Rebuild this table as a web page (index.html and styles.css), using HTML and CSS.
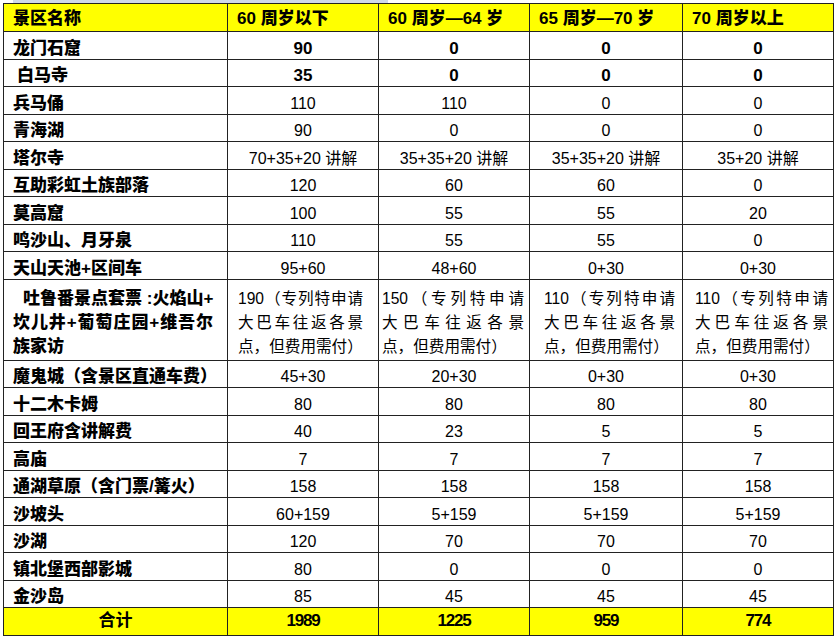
FILE: index.html
```html
<!DOCTYPE html>
<html lang="zh-CN">
<head>
<meta charset="utf-8">
<title>景区门票</title>
<link rel="stylesheet" href="styles.css">
</head>
<body>
<div class="strip"></div>
<table class="fees">
  <colgroup>
    <col class="c-name"><col class="c-a"><col class="c-b"><col class="c-c"><col class="c-d">
  </colgroup>
  <thead>
    <tr class="head">
      <th>景区名称</th><th>60 周岁以下</th><th>60 周岁—64 岁</th><th>65 周岁—70 岁</th><th>70 周岁以上</th>
    </tr>
  </thead>
  <tbody>
    <tr class="strong"><th>龙门石窟</th><td>90</td><td>0</td><td>0</td><td>0</td></tr>
    <tr class="strong"><th><span class="indent">白马寺</span></th><td>35</td><td>0</td><td>0</td><td>0</td></tr>
    <tr><th>兵马俑</th><td>110</td><td>110</td><td>0</td><td>0</td></tr>
    <tr><th>青海湖</th><td>90</td><td>0</td><td>0</td><td>0</td></tr>
    <tr><th>塔尔寺</th><td>70+35+20 讲解</td><td>35+35+20 讲解</td><td>35+35+20 讲解</td><td>35+20 讲解</td></tr>
    <tr><th>互助彩虹土族部落</th><td>120</td><td>60</td><td>60</td><td>0</td></tr>
    <tr><th>莫高窟</th><td>100</td><td>55</td><td>55</td><td>20</td></tr>
    <tr><th>鸣沙山、月牙泉</th><td>110</td><td>55</td><td>55</td><td>0</td></tr>
    <tr><th>天山天池+区间车</th><td>95+60</td><td>48+60</td><td>0+30</td><td>0+30</td></tr>
    <tr class="tall">
      <th><span class="jl first">吐鲁番景点套票 :火焰山+</span><span class="jl">坎儿井+葡萄庄园+维吾尔</span><span class="ll">族家访</span></th>
      <td><span class="jl">190（专列特申请</span><span class="jl">大巴车往返各景</span><span class="ll">点，但费用需付）</span></td>
      <td><span class="jl">150（专列特申请</span><span class="jl">大巴车往返各景</span><span class="ll">点，但费用需付）</span></td>
      <td><span class="jl">110（专列特申请</span><span class="jl">大巴车往返各景</span><span class="ll">点，但费用需付）</span></td>
      <td><span class="jl">110（专列特申请</span><span class="jl">大巴车往返各景</span><span class="ll">点，但费用需付）</span></td>
    </tr>
    <tr><th>魔鬼城（含景区直通车费）</th><td>45+30</td><td>20+30</td><td>0+30</td><td>0+30</td></tr>
    <tr><th>十二木卡姆</th><td>80</td><td>80</td><td>80</td><td>80</td></tr>
    <tr><th>回王府含讲解费</th><td>40</td><td>23</td><td>5</td><td>5</td></tr>
    <tr><th>高庙</th><td>7</td><td>7</td><td>7</td><td>7</td></tr>
    <tr><th>通湖草原（含门票/篝火）</th><td>158</td><td>158</td><td>158</td><td>158</td></tr>
    <tr><th>沙坡头</th><td>60+159</td><td>5+159</td><td>5+159</td><td>5+159</td></tr>
    <tr><th>沙湖</th><td>120</td><td>70</td><td>70</td><td>70</td></tr>
    <tr><th>镇北堡西部影城</th><td>80</td><td>0</td><td>0</td><td>0</td></tr>
    <tr><th>金沙岛</th><td>85</td><td>45</td><td>45</td><td>45</td></tr>
  </tbody>
  <tfoot>
    <tr class="total"><th>合计</th><td>1989</td><td>1225</td><td>959</td><td>774</td></tr>
  </tfoot>
</table>
</body>
</html>
```
FILE: styles.css
```css
html, body {
  margin: 0;
  padding: 0;
  background: #ffffff;
}
body {
  padding: 0 3px;
  font-family: "Liberation Sans", "Noto Sans CJK SC", sans-serif;
  color: #000000;
}
.strip {
  margin-left: 10px;
  width: 375px;
  height: 3px;
  background: #cfd9ea;
}
.fees {
  border-collapse: collapse;
  table-layout: fixed;
  width: 830px;
  border: 1px solid #1a1a1a;
}
.c-name { width: 224px; }
.c-a { width: 151px; }
.c-b { width: 151px; }
.c-c { width: 153px; }
.c-d { width: 151px; }

.fees th, .fees td {
  border: 1px solid #222222;
  height: 26.5px;
  padding: 0 9px 0 9px;
  line-height: 20px;
  vertical-align: bottom;
  white-space: nowrap;
  overflow: hidden;
}
.fees th {
  text-align: left;
  font-weight: 900;
  font-size: 17px;
}
.fees td {
  text-align: center;
  font-weight: 400;
  font-size: 16px;
}
.head th {
  background: #ffff00;
  height: 24px;
  padding-left: 9px;
  vertical-align: middle;
  padding-top: 3px;
}
.strong td {
  font-weight: 700;
  font-size: 17px;
}
.indent {
  padding-left: 4px;
}
.tall th, .tall td {
  height: 79px;
  line-height: 24px;
  padding-bottom: 1px;
  white-space: normal;
}
.tall td {
  font-size: 15.6px;
}
.jl {
  display: block;
  text-align: justify;
  text-align-last: justify;
  white-space: nowrap;
}
.ll {
  display: block;
  text-align: left;
  white-space: nowrap;
}
.tall th {
  padding-left: 9px;
  padding-right: 14px;
}
.tall .first {
  padding-left: 10px;
}
.tall td:nth-child(2) { padding: 0 15px 1px 10px; }
.tall td:nth-child(3) { padding: 0 5px 1px 3px; }
.tall td:nth-child(4) { padding: 0 7px 1px 14px; }
.tall td:nth-child(5) { padding: 0 5px 1px 12px; }

.total th, .total td {
  background: #ffff00;
  font-weight: 700;
  font-size: 17px;
  vertical-align: middle;
}
.total th {
  text-align: center;
}
.total td {
  letter-spacing: -1.2px;
}
```
